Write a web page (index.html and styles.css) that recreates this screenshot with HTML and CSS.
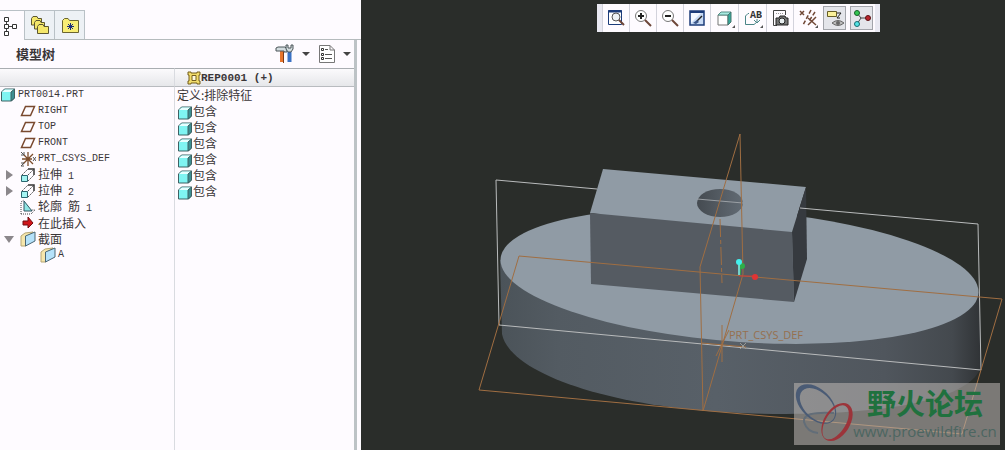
FILE: index.html
```
<!DOCTYPE html>
<html lang="zh-CN">
<head>
    <meta charset="UTF-8">
    <meta name="viewport" content="width=device-width, initial-scale=1.0">
    <title>PRT0014.PRT</title>
    <link rel="stylesheet" href="styles.css">
</head>
<body>
    <!-- shared icons -->
    <svg class="sprite" aria-hidden="true">
        <symbol id="cube" viewBox="0 0 16 16">
            <path d="M1.500 5 4.500 2H14.500V11L11.500 14H1.500Z" fill="#7ff4f2" stroke="#3f6264"/>
            <path d="M2 5 5 2.500H14L11 5Z" fill="#e6ffff"/>
            <path d="M11 5 14.500 2V11L11 14Z" fill="#3c8f92" stroke="#3f6264"/>
        </symbol>
        <symbol id="plane" viewBox="0 0 16 16">
            <path d="M5.500 3.500H14.500L10.500 12.500H1.500Z" fill="none" stroke="#79492f" stroke-width="1.500"/>
        </symbol>
        <symbol id="csys" viewBox="0 0 16 16">
            <path d="M8 1V15M2 8H12M3 13 13 3M4 4 13 13" stroke="#7b4c2c" stroke-width="1.300"/>
            <path d="M1 1 4 4M4 1V4H1M13 6 16 10M16 6 13 10M1 12H4L1 15H4" fill="none" stroke="#555"/>
        </symbol>
        <symbol id="extrude" viewBox="0 0 16 16">
            <path d="M2 8 8 2M8 14 14 8M8 8 13 3" fill="none" stroke="#555" stroke-dasharray="2 1"/>
            <path d="M8 2H14V8" fill="none" stroke="#333" stroke-width="1.500"/>
            <path d="M1.500 8.500H7.500V14.500H1.500Z" fill="#a4f4f2" stroke="#2c6670"/>
        </symbol>
        <symbol id="rib" viewBox="0 0 16 16">
            <path d="M1 15V3L4 1M1 15H11L15 11H11" fill="none" stroke="#444" stroke-dasharray="1 1"/>
            <path d="M4 2 12 12H4Z" fill="#8ee6e4" stroke="#2f5560"/>
        </symbol>
        <symbol id="insert" viewBox="0 0 16 16">
            <path d="M3 6H8V2L13 8 8 13V10H3Z" fill="#d0161b" stroke="#720d10"/>
        </symbol>
        <symbol id="section" viewBox="0 0 16 16">
            <path d="M1 5 5 2 13 1 6 6V15H1Z" fill="#f6e6ac" stroke="#b6a775"/>
            <path d="M5.500 5 15 1V10L5.500 15Z" fill="#b5e2fa" stroke="#4a6675"/>
        </symbol>
    </svg>

    <div class="app">
        <aside class="sidebar">
            <nav class="tabs">
                <button class="tab tab-model active" type="button" aria-label="模型树">
                    <svg width="16" height="22" viewBox="0 0 16 22">
                        <path d="M4.500 5V17M5 11.500H11" stroke="#444" fill="none"/>
                        <path d="M2.500 2.500H6.500V6.500H2.500ZM2.500 9.500H6.500V13.500H2.500ZM2.500 16.500H6.500V20.500H2.500ZM10.500 9.500H14.500V13.500H10.500Z" fill="#fff" stroke="#333"/>
                    </svg>
                </button>
                <button class="tab" type="button" aria-label="文件夹浏览器">
                    <svg width="20" height="20" viewBox="0 0 20 20">
                        <g fill="#f4e76a" stroke="#5c5730">
                            <path d="M1.500 10V3.500L3 1.500H7L8 3.500H11.500V10Z"/>
                            <path d="M4.500 14V7.500L6 5.500H10L11 7.500H14.500V14Z"/>
                            <path d="M7.500 18.500V11.500L9 9.500H13L14 11.500H18.500V18.500Z"/>
                        </g>
                    </svg>
                </button>
                <button class="tab" type="button" aria-label="收藏夹">
                    <svg width="20" height="20" viewBox="0 0 20 20">
                        <path d="M2.500 17.500V5.500L4.500 3.500H8L9.500 5.500H18.500V17.500Z" fill="#f8ee75" stroke="#6b6530"/>
                        <path d="M10.500 8V15M7 11.500H14M8 9 13 14M13 9 8 14" stroke="#182a7c"/>
                    </svg>
                </button>
            </nav>

            <section class="panel">
                <header class="panel-head">
                    <h1>模型树</h1>
                    <button class="menu-button" type="button" aria-label="设置">
                        <svg width="20" height="20" viewBox="0 0 20 20">
                            <path d="M7 7V18" stroke="#e8752c" stroke-width="4"/>
                            <path d="M8.500 8V19" stroke="#7b3b18"/>
                            <path d="M1 7V4L3 3H10L12 5V8H9V7H3Z" fill="#d3dcdf" stroke="#4b5559"/>
                            <path d="M14.500 8V18" stroke="#3b72c4" stroke-width="4"/>
                            <path d="M11 1V5L13 8H16L18 5V1L16 1V4H13V1Z" fill="#d3dcdf" stroke="#4b5559"/>
                        </svg>
                        <span class="caret"></span>
                    </button>
                    <button class="menu-button" type="button" aria-label="显示">
                        <svg width="18" height="20" viewBox="0 0 18 20">
                            <path d="M1.500 1.500H12L16.500 6V18.500H1.500ZM12 1.500V6H16.500" fill="#fff" stroke="#777"/>
                            <path d="M7 5.500H10M7 10.500H14M7 14.500H14" stroke="#555"/>
                            <path d="M3.500 4.500H5.500V6.500H3.500ZM3.500 9.500H5.500V11.500H3.500ZM3.500 13.500H5.500V15.500H3.500Z" fill="none" stroke="#333"/>
                        </svg>
                        <span class="caret"></span>
                    </button>
                </header>

                <table class="tree">
                    <thead>
                        <tr>
                            <th class="col-name"></th>
                            <th>
                                <div class="rep">
                                    <svg width="14" height="14" viewBox="0 0 14 14">
                                        <path d="M1 1H4V2H10V1H13V4H12V10H13V13H10V12H4V13H1V10H2V4H1Z" fill="#f1dc6b" stroke="#755e1d"/>
                                        <path d="M5 4.500H9V9.500H5Z" fill="#fffbe0" stroke="#755e1d"/>
                                    </svg>
                                    REP0001 (+)
                                </div>
                            </th>
                        </tr>
                    </thead>
                    <tbody>
                        <tr>
                            <td><div class="node root"><svg class="icon"><use href="#cube"/></svg>PRT0014.PRT</div></td>
                            <td><div class="state zh">定义:排除特征</div></td>
                        </tr>
                        <tr>
                            <td><div class="node"><svg class="icon"><use href="#plane"/></svg>RIGHT</div></td>
                            <td><div class="state zh"><svg class="icon"><use href="#cube"/></svg>包含</div></td>
                        </tr>
                        <tr>
                            <td><div class="node"><svg class="icon"><use href="#plane"/></svg>TOP</div></td>
                            <td><div class="state zh"><svg class="icon"><use href="#cube"/></svg>包含</div></td>
                        </tr>
                        <tr>
                            <td><div class="node"><svg class="icon"><use href="#plane"/></svg>FRONT</div></td>
                            <td><div class="state zh"><svg class="icon"><use href="#cube"/></svg>包含</div></td>
                        </tr>
                        <tr>
                            <td><div class="node"><svg class="icon"><use href="#csys"/></svg>PRT_CSYS_DEF</div></td>
                            <td><div class="state zh"><svg class="icon"><use href="#cube"/></svg>包含</div></td>
                        </tr>
                        <tr>
                            <td><div class="node branch"><button class="toggle" type="button" aria-label="展开"></button><svg class="icon"><use href="#extrude"/></svg><span><span class="zh">拉伸</span> 1</span></div></td>
                            <td><div class="state zh"><svg class="icon"><use href="#cube"/></svg>包含</div></td>
                        </tr>
                        <tr>
                            <td><div class="node branch"><button class="toggle" type="button" aria-label="展开"></button><svg class="icon"><use href="#extrude"/></svg><span><span class="zh">拉伸</span> 2</span></div></td>
                            <td><div class="state zh"><svg class="icon"><use href="#cube"/></svg>包含</div></td>
                        </tr>
                        <tr>
                            <td><div class="node"><svg class="icon"><use href="#rib"/></svg><span><span class="zh">轮廓</span> <span class="zh">筋</span> 1</span></div></td>
                            <td></td>
                        </tr>
                        <tr>
                            <td><div class="node"><svg class="icon"><use href="#insert"/></svg><span class="zh">在此插入</span></div></td>
                            <td></td>
                        </tr>
                        <tr>
                            <td><div class="node branch"><button class="toggle open" type="button" aria-label="折叠"></button><svg class="icon"><use href="#section"/></svg><span class="zh">截面</span></div></td>
                            <td></td>
                        </tr>
                        <tr>
                            <td><div class="node leaf"><svg class="icon"><use href="#section"/></svg>A</div></td>
                            <td></td>
                        </tr>
                        <tr class="filler"><td></td><td></td></tr>
                    </tbody>
                </table>
            </section>
        </aside>

        <main class="viewport">
            <svg class="model" viewBox="361 0 644 450" preserveAspectRatio="xMidYMid slice">
                <defs>
                    <linearGradient id="rim">
                        <stop offset="0" stop-color="#4b5359"/>
                        <stop offset="0.120" stop-color="#535b62"/>
                        <stop offset="0.450" stop-color="#586068"/>
                        <stop offset="0.800" stop-color="#50565d"/>
                        <stop offset="0.940" stop-color="#44494e"/>
                        <stop offset="1" stop-color="#303336"/>
                    </linearGradient>
                    <linearGradient id="bore">
                        <stop offset="0" stop-color="#454b51"/>
                        <stop offset="1" stop-color="#626b74"/>
                    </linearGradient>
                </defs>

                <!-- disc -->
                <path d="M500 260 502 334C510 374 612 408 741 413 870 418 972 402 981 366L979 292Z" fill="url(#rim)"/>
                <ellipse rx="239" ry="66" transform="matrix(1 0.067 0 1 739.500 276)" fill="#909ba5"/>

                <!-- block with hole -->
                <path d="M603 169 806 187 792 232 590 213Z" fill="#909ba5"/>
                <path d="M590 213 792 232 794 302 591 284Z" fill="#555b62"/>
                <path d="M806 187 807 259 794 302 792 232Z" fill="#363a3f"/>
                <ellipse cx="720" cy="203" rx="23" ry="14" fill="url(#bore)"/>

                <g fill="none" stroke="#b9bbbc">
                    <path d="M597 189 496 180 499 325 981 370 978 224 800 208"/>
                    <path d="M697 199 743 203" stroke="#9ba0a5"/>
                </g>
                <g fill="none" stroke="#a06e42">
                    <path d="M519 256 1002 299 962 434 479 390Z"/>
                    <path d="M740 134 743 274 703 411 700 267Z"/>
                    <path d="M720 219 722 283" stroke-dasharray="18 3 4 3"/>
                    <path d="M722 325V362M702 343 746 347M729 330 716 356"/>
                </g>
                <path d="M740 343 746 349M746 343 740 349" stroke="#9a9a94"/>
                <text class="csys-label" x="729" y="339">PRT_CSYS_DEF</text>

                <!-- spin center -->
                <path d="M739 276H755" stroke="#c93a3a"/>
                <circle cx="755" cy="277" r="3" fill="#e03434"/>
                <path d="M740 275 741 266" stroke="#2fae48"/>
                <circle cx="742" cy="266" r="3" fill="#2fae48"/>
                <path d="M739 275V262" stroke="#7ff7ee" stroke-width="1.500"/>
                <circle cx="739" cy="262" r="3" fill="#43f0ee"/>
            </svg>

            <div class="toolbar" role="toolbar" aria-label="视图">
                <button type="button" aria-label="重新调整">
                    <svg width="18" height="18" viewBox="0 0 18 18">
                        <path d="M1.500 1.500H14.500V15.500H1.500Z" fill="#fff" stroke="#1c3c7a"/>
                        <path d="M1 2.500H15" stroke="#1c3c7a" stroke-width="2"/>
                        <circle cx="9" cy="8" r="4" fill="#eef3f6" stroke="#555"/>
                        <path d="M12 11 17 16" stroke="#6d4638" stroke-width="2"/>
                    </svg>
                </button>
                <button type="button" aria-label="放大">
                    <svg width="18" height="18" viewBox="0 0 18 18">
                        <circle cx="7" cy="7" r="5.500" fill="#fff" stroke="#777"/>
                        <path d="M4 7H10M7 4V10" stroke="#222" stroke-width="2"/>
                        <path d="M11 11 17 17" stroke="#6d4638" stroke-width="2"/>
                    </svg>
                </button>
                <button type="button" aria-label="缩小">
                    <svg width="18" height="18" viewBox="0 0 18 18">
                        <circle cx="7" cy="7" r="5.500" fill="#fff" stroke="#777"/>
                        <path d="M4 7H10" stroke="#222" stroke-width="2"/>
                        <path d="M11 11 17 17" stroke="#6d4638" stroke-width="2"/>
                    </svg>
                </button>
                <button type="button" aria-label="重画">
                    <svg width="18" height="18" viewBox="0 0 18 18">
                        <path d="M2 2H16V16H2Z" fill="#c8daf4" stroke="#1c3c7a" stroke-width="1.500"/>
                        <path d="M2 3H16" stroke="#1c3c7a" stroke-width="2"/>
                        <path d="M3 4H13L3 14Z" fill="#f3f8ff"/>
                        <path d="M14 7 9 12" stroke="#222" stroke-width="1.500"/>
                        <path d="M9 11 5 14 8 15 11 13Z" fill="#3a5487"/>
                    </svg>
                </button>
                <button class="more" type="button" aria-label="显示样式">
                    <svg width="18" height="18" viewBox="0 0 18 18">
                        <path d="M2 6H12V16H2Z" fill="#fff" stroke="#777"/>
                        <path d="M2 6 5 3H15L12 6Z" fill="#a8ece2" stroke="#568d86"/>
                        <path d="M12 6 15 3V13L12 16Z" fill="#34ab9b" stroke="#46756f"/>
                    </svg>
                </button>
                <button class="more" type="button" aria-label="已命名视图">
                    <svg width="18" height="18" viewBox="0 0 18 18">
                        <path d="M5 4.500H4L1.500 7V15.500H10L13 13V10M10 11 13 14 16 11" fill="none" stroke="#4a8587"/>
                        <text class="icon-label" x="6" y="9">AB</text>
                    </svg>
                </button>
                <button type="button" aria-label="视图管理器">
                    <svg width="18" height="18" viewBox="0 0 18 18">
                        <path d="M6 16.500H2.500V1.500H14.500V6" fill="none" stroke="#444"/>
                        <path d="M5 4.500H12" stroke="#999" stroke-dasharray="1 1"/>
                        <path d="M5 9H8L9 7H14L15 9H17V16H5Z" fill="#777" stroke="#222"/>
                        <circle cx="11" cy="12" r="3" fill="#e8eef0" stroke="#222"/>
                    </svg>
                </button>
                <button class="more" type="button" aria-label="基准显示过滤器">
                    <svg width="18" height="18" viewBox="0 0 18 18">
                        <path d="M1 2 5 6M5 2 1 6M9 9 17 16M17 8 9 16" stroke="#704836" stroke-width="1.500"/>
                        <path d="M12 1 4 16M16 3 10 12" stroke="#704836" stroke-width="1.500" stroke-dasharray="4 2"/>
                    </svg>
                </button>
                <button class="pressed" type="button" aria-pressed="true" aria-label="注释显示">
                    <svg width="18" height="18" viewBox="0 0 18 18">
                        <path d="M1.500 2.500H10.500V7.500H1.500Z" fill="#fbf19a" stroke="#665d25"/>
                        <path d="M11 4H15L11 9H14" fill="none" stroke="#222"/>
                        <path d="M6 14Q12 9 18 14 12 19 6 14Z" fill="#bbb" stroke="#666"/>
                        <circle cx="12" cy="14" r="2" fill="#666"/>
                    </svg>
                </button>
                <button class="pressed" type="button" aria-pressed="true" aria-label="旋转中心">
                    <svg width="18" height="18" viewBox="0 0 18 18">
                        <path d="M4 4 8 9 4 15M8 9H15" fill="none" stroke="#444"/>
                        <circle cx="4" cy="4" r="2.500" fill="#33c652" stroke="#145f26"/>
                        <circle cx="4" cy="15" r="2.500" fill="#55e4e4" stroke="#186c72"/>
                        <circle cx="15" cy="9" r="2.500" fill="#b9252b" stroke="#5c1013"/>
                    </svg>
                </button>
            </div>

            <div class="watermark">
                <svg width="60" height="62" viewBox="0 0 60 62">
                    <path d="M40 30Q8 28 10 39 13 49 24 50" fill="none" stroke="#626d78" stroke-width="2"/>
                    <g fill-rule="evenodd">
                        <path transform="translate(22 21) rotate(44)" fill="#4a5b75" d="M-24 0A24 15 0 1 1 24 0A24 15 0 1 1 -24 0ZM-19 0A21 13 0 1 0 23 0A21 13 0 1 0 -19 0Z"/>
                        <path transform="translate(43 39) rotate(-58)" fill="#9c343a" d="M-21 0A21 13 0 1 1 21 0A21 13 0 1 1 -21 0ZM-20 -1A19 10 0 1 0 18 -1A19 10 0 1 0 -20 -1Z"/>
                    </g>
                </svg>
                <div class="watermark-text">
                    <strong>野火论坛</strong>
                    <span>www.proewildfire.cn</span>
                </div>
            </div>
        </main>
    </div>
</body>
</html>
```
FILE: styles.css
```
* {
    box-sizing: border-box;
}
body {
    margin: 0;
    font-family: "Liberation Mono", "Noto Sans CJK SC", monospace;
    font-size: 10px;
    color: #3a3638;
    background-color: #fefbff;
}
button {
    padding: 0;
    border: none;
    background: none;
    cursor: pointer;
}
svg {
    display: block;
    flex: none;
}
.sprite {
    position: absolute;
    width: 0;
    height: 0;
}
.app {
    display: flex;
    min-height: 100vh;
}

/* left side */
.sidebar {
    flex: 0 0 361px;
    display: flex;
    flex-direction: column;
    padding-top: 10px;
}
.tabs {
    display: flex;
    height: 30px;
    border-bottom: 1px solid #b5bbbd;
}
.tab {
    display: flex;
    align-items: center;
    justify-content: center;
    width: 30px;
    border-top: 1px solid #b9c1c6;
    border-right: 1px solid #b9c1c6;
    background-color: #edf1f5;
}
.tab-model {
    width: 25px;
    padding-right: 4px;
}
.tab.active {
    height: 30px;
    background-color: #fefbff;
}
.panel {
    flex: 1;
    display: flex;
    flex-direction: column;
    margin-right: 4px;
    border-right: 3px solid #bdc3c6;
}
.panel-head {
    display: flex;
    align-items: center;
    gap: 8px;
    height: 28px;
    padding: 0 3px 0 16px;
}
h1 {
    flex: 1;
    margin: 0;
    font-family: "Noto Sans CJK SC", sans-serif;
    font-size: 13px;
    line-height: 16px;
}
.menu-button {
    display: flex;
    align-items: center;
    gap: 7px;
}
.caret {
    border: 4px solid transparent;
    border-top: 4px solid #444;
    border-bottom: none;
}
.tree {
    flex: 1;
    width: 100%;
    table-layout: fixed;
    border-collapse: separate;
    border-spacing: 0;
}
.tree th,
.tree td {
    height: 16px;
    padding: 0;
}
.tree tr > :first-child {
    border-right: 1px solid #d9dbe0;
}
.tree th {
    height: 19px;
    border-top: 1px solid #a9adb1;
    border-bottom: 1px solid #b8bbbf;
    background: linear-gradient(#fbfafc, #e6e7ea);
}
.col-name {
    width: 175px;
}
.rep {
    display: flex;
    align-items: center;
    padding-left: 12px;
    font-size: 11px;
}
.node,
.state {
    display: flex;
    align-items: center;
    height: 16px;
    line-height: 16px;
    white-space: pre;
}
.node {
    gap: 2px;
    padding-left: 20px;
}
.node.root {
    padding-left: 0;
}
.node.branch {
    padding-left: 4px;
}
.node.leaf {
    padding-left: 40px;
}
.state {
    padding-left: 2px;
}
.state .icon {
    align-self: flex-start;
    margin-top: 2px;
}
.zh {
    font-family: "Noto Sans CJK SC", sans-serif;
    font-size: 12px;
    line-height: 16px;
}
.icon {
    width: 16px;
    height: 16px;
}
.toggle {
    width: 14px;
    height: 16px;
}
.toggle::before {
    content: "";
    display: block;
    width: 0;
    margin-left: 2px;
    border: 5px solid transparent;
    border-left: 7px solid #8b878b;
    border-right: none;
}
.toggle.open::before {
    margin-left: 0;
    border: 5px solid transparent;
    border-top: 7px solid #8b878b;
    border-bottom: none;
}
.filler td {
    height: auto;
}

/* graphics window */
.viewport {
    position: relative;
    flex: 1;
    min-width: 0;
    overflow: hidden;
    background-color: #2a2d2a;
}
.model {
    width: 100%;
    height: 100%;
}
.csys-label {
    font-family: "Open Sans", sans-serif;
    font-size: 11px;
    fill: #96704f;
}
.toolbar {
    position: absolute;
    top: 4px;
    right: 125px;
    display: flex;
    height: 28px;
    padding: 0 5px;
    background-color: #e9e9f2;
}
.toolbar button {
    position: relative;
    display: flex;
    align-items: center;
    justify-content: center;
    width: 27px;
    border-left: 1px solid #d3d3dc;
    background-color: #fefbff;
}
.toolbar .more {
    width: 28px;
}
.toolbar .more::after {
    content: "";
    position: absolute;
    right: 3px;
    bottom: 4px;
    border-left: 3px solid transparent;
    border-bottom: 3px solid #555;
}
.toolbar .pressed {
    border: 2px solid #fefbff;
    box-shadow: inset 0 0 0 1px #a2a4aa;
    background-color: #e4e5ea;
}
.icon-label {
    font-family: "Liberation Mono", monospace;
    font-size: 10px;
    font-weight: bold;
    fill: #333;
}
.watermark {
    position: absolute;
    right: 5px;
    bottom: 5px;
    display: flex;
    width: 206px;
    height: 62px;
    background-color: rgba(190, 184, 180, 0.55);
}
.watermark-text {
    display: flex;
    flex-direction: column;
    align-items: center;
    width: 142px;
    font-family: "Open Sans", "Noto Sans CJK SC", sans-serif;
    white-space: nowrap;
}
.watermark strong {
    font-family: "Noto Sans CJK SC", sans-serif;
    font-size: 29px;
    line-height: 38px;
    color: #20713e;
}
.watermark span {
    font-size: 15px;
    line-height: 20px;
    color: #4c6661;
}
```
